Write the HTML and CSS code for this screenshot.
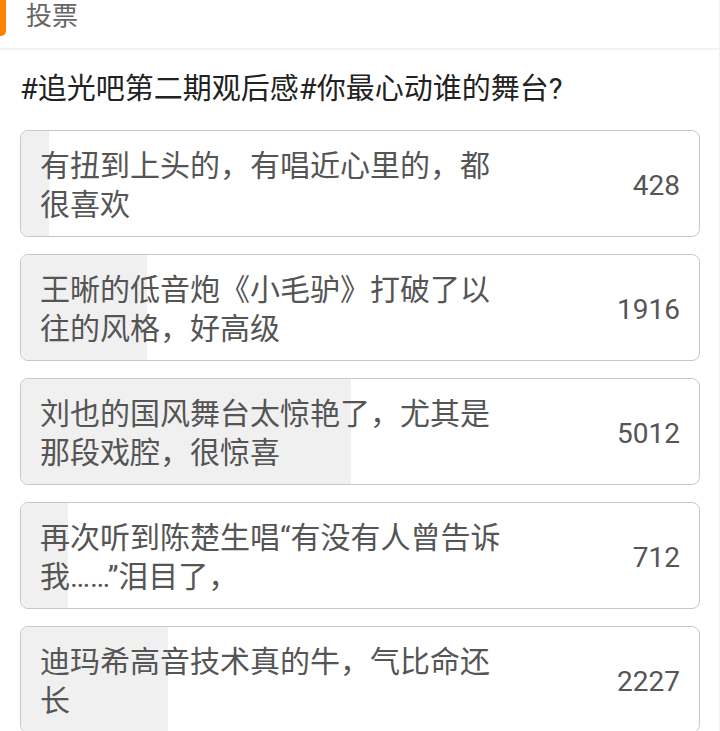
FILE: index.html
```html
<!DOCTYPE html>
<html lang="zh-CN">
<head>
    <meta charset="UTF-8">
    <meta name="viewport" content="width=device-width, initial-scale=1.0">
    <title>投票</title>
    <link rel="stylesheet" href="styles.css">
</head>
<body>

    <div class="page">
        <div class="vote-header">
            <span class="vote-mark"></span>
            <span class="vote-title">投票</span>
        </div>

        <div class="vote-body">
            <h2 class="question">#追光吧第二期观后感#你最心动谁的舞台?</h2>

            <div class="option">
                <div class="option-fill" style="width: 4.16%"></div>
                <div class="option-text">有扭到上头的，有唱近心里的，都很喜欢</div>
                <div class="option-count">428</div>
            </div>

            <div class="option">
                <div class="option-fill" style="width: 18.61%"></div>
                <div class="option-text">王晰的低音炮《小毛驴》打破了以往的风格，好高级</div>
                <div class="option-count">1916</div>
            </div>

            <div class="option">
                <div class="option-fill" style="width: 48.68%"></div>
                <div class="option-text">刘也的国风舞台太惊艳了，尤其是那段戏腔，很惊喜</div>
                <div class="option-count">5012</div>
            </div>

            <div class="option">
                <div class="option-fill" style="width: 6.92%"></div>
                <div class="option-text">再次听到陈楚生唱“有没有人曾告诉我……”泪目了，</div>
                <div class="option-count">712</div>
            </div>

            <div class="option">
                <div class="option-fill" style="width: 21.63%"></div>
                <div class="option-text">迪玛希高音技术真的牛，气比命还长</div>
                <div class="option-count">2227</div>
            </div>
        </div>
    </div>

</body>
</html>
```

FILE: styles.css
```css
body {
    margin: 0;
    background-color: #fff;
    font-family: Roboto, "Noto Sans CJK SC", sans-serif;
}

.page {
    width: 719px;
    min-height: 731px;
    border-right: 1px solid #f2f2f2;
}

.vote-header {
    display: flex;
    align-items: flex-start;
    height: 48px;
    border-bottom: 2px solid #f2f2f2;
}

.vote-mark {
    width: 6px;
    height: 36px;
    background-color: #ff8200;
    border-radius: 0 0 5px 0;
}

.vote-title {
    margin-left: 20px;
    font-size: 26px;
    line-height: 33px;
    color: #666;
}

.vote-body {
    padding: 19px 19px 0 20px;
}

.question {
    margin: 0 0 21px 0;
    font-size: 29px;
    font-weight: normal;
    line-height: 40px;
    color: #222;
}

.option {
    position: relative;
    display: flex;
    align-items: center;
    justify-content: space-between;
    margin-bottom: 17px;
    padding: 15px 19px 12px 19px;
    border: 1px solid #c8c8c8;
    border-radius: 8px;
    overflow: hidden;
}

.option-fill {
    position: absolute;
    top: 0;
    left: 0;
    bottom: 0;
    background-color: #f0f0f0;
}

.option-text {
    position: relative;
    width: 465px;
    font-size: 30px;
    line-height: 39px;
    color: #555;
}

.option-count {
    position: relative;
    font-size: 28px;
    color: #555;
}
```
